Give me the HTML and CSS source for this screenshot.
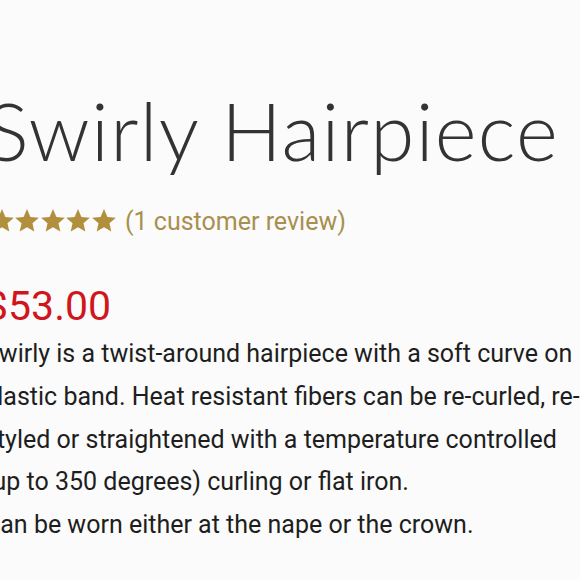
FILE: index.html
```html
<!DOCTYPE html>
<html>
<head>
<meta charset="utf-8">
<link rel="stylesheet" href="styles.css">
</head>
<body>
<main class="product">
  <h1 class="title">Swirly Hairpiece</h1>
  <div class="rating">
    <span class="stars" aria-label="Rated 5 out of 5">
      <svg viewBox="0 0 24 24" class="star"><path d="M12 1L15.12 8.21 22.94 8.95 17.04 14.14 18.76 21.8 12 17.8 5.24 21.8 6.96 14.14 1.06 8.95 8.88 8.21z"/></svg>
      <svg viewBox="0 0 24 24" class="star"><path d="M12 1L15.12 8.21 22.94 8.95 17.04 14.14 18.76 21.8 12 17.8 5.24 21.8 6.96 14.14 1.06 8.95 8.88 8.21z"/></svg>
      <svg viewBox="0 0 24 24" class="star"><path d="M12 1L15.12 8.21 22.94 8.95 17.04 14.14 18.76 21.8 12 17.8 5.24 21.8 6.96 14.14 1.06 8.95 8.88 8.21z"/></svg>
      <svg viewBox="0 0 24 24" class="star"><path d="M12 1L15.12 8.21 22.94 8.95 17.04 14.14 18.76 21.8 12 17.8 5.24 21.8 6.96 14.14 1.06 8.95 8.88 8.21z"/></svg>
      <svg viewBox="0 0 24 24" class="star"><path d="M12 1L15.12 8.21 22.94 8.95 17.04 14.14 18.76 21.8 12 17.8 5.24 21.8 6.96 14.14 1.06 8.95 8.88 8.21z"/></svg>
    </span>
    <span class="review-link">(1 customer review)</span>
  </div>
  <p class="price">$53.00</p>
  <div class="description">
    <p>Swirly is a twist-around hairpiece with a soft curve on elastic band. Heat resistant fibers can be re-curled, re-styled or straightened with a temperature controlled (up to 350 degrees) curling or flat iron.</p>
    <p>Can be worn either at the nape or the crown.</p>
  </div>
</main>
</body>
</html>
```

FILE: styles.css
```css
html, body {
  margin: 0;
  padding: 0;
  background: #fbfbfb;
}

.product {
  margin-left: -16px;
  width: 620px;
  padding-top: 80px;
  font-family: Roboto, "Liberation Sans", sans-serif;
}

.title {
  margin: 0 0 0 2px;
  font-family: Lato, "Open Sans", sans-serif;
  font-weight: 300;
  font-size: 80px;
  line-height: 100px;
  color: #333333;
  letter-spacing: 1.3px;
}

.rating {
  display: flex;
  align-items: center;
  gap: 9px;
  margin-top: 21px;
  height: 40px;
}

.stars {
  display: flex;
  gap: 0;
  margin-left: 4.5px;
}

.star {
  width: 26px;
  height: 26px;
  margin-right: -0.5px;
  fill: #b28f3d;
}

.review-link {
  font-size: 25px;
  color: #a88f4f;
}

.price {
  margin: 40px 0 0 1px;
  font-size: 41px;
  line-height: 50px;
  color: #d0161c;
}

.description {
  width: 612px;
  margin-top: 2px;
  font-size: 25px;
  line-height: 42.75px;
  color: #1e1e1e;
}

.description p {
  margin: 0;
}
```
